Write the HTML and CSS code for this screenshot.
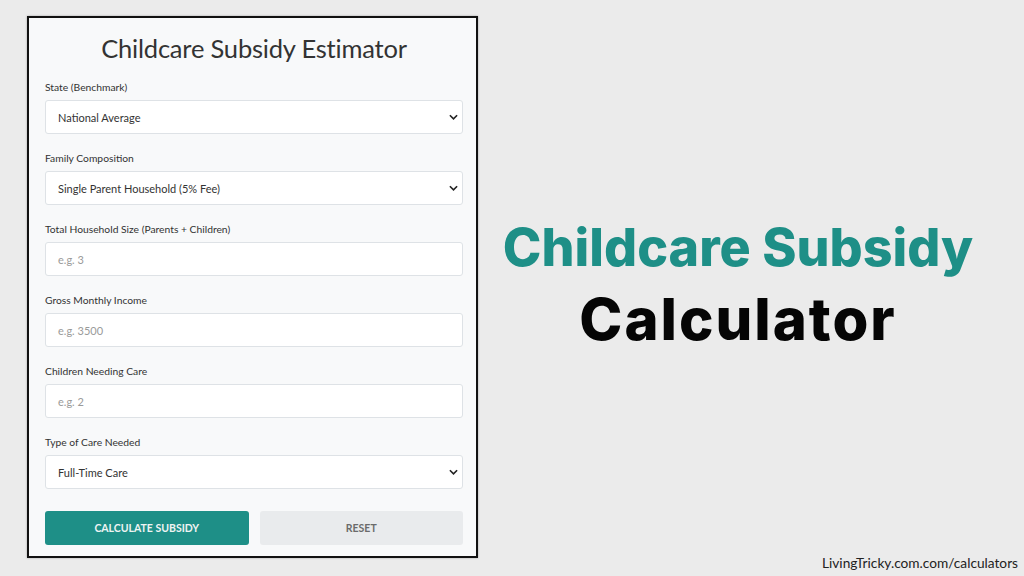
FILE: index.html
```html
<!DOCTYPE html>
<html lang="en">
<head>
<meta charset="utf-8">
<title>Childcare Subsidy Calculator</title>
<link rel="stylesheet" href="styles.css">
</head>
<body>
<div class="page">
  <div class="left">
    <form class="card">
      <h1 class="card-title">Childcare Subsidy Estimator</h1>
      <div class="field">
        <label class="label">State (Benchmark)</label>
        <div class="control select"><span>National Average</span><svg class="chev" viewBox="0 0 10 6" width="9" height="6"><path d="M1 1l4 4 4-4" fill="none" stroke="#222" stroke-width="1.8"/></svg></div>
      </div>
      <div class="field">
        <label class="label">Family Composition</label>
        <div class="control select"><span>Single Parent Household (5% Fee)</span><svg class="chev" viewBox="0 0 10 6" width="9" height="6"><path d="M1 1l4 4 4-4" fill="none" stroke="#222" stroke-width="1.8"/></svg></div>
      </div>
      <div class="field">
        <label class="label">Total Household Size (Parents + Children)</label>
        <div class="control input"><span class="ph">e.g. 3</span></div>
      </div>
      <div class="field">
        <label class="label">Gross Monthly Income</label>
        <div class="control input"><span class="ph">e.g. 3500</span></div>
      </div>
      <div class="field">
        <label class="label">Children Needing Care</label>
        <div class="control input"><span class="ph">e.g. 2</span></div>
      </div>
      <div class="field">
        <label class="label">Type of Care Needed</label>
        <div class="control select"><span>Full-Time Care</span><svg class="chev" viewBox="0 0 10 6" width="9" height="6"><path d="M1 1l4 4 4-4" fill="none" stroke="#222" stroke-width="1.8"/></svg></div>
      </div>
      <div class="buttons">
        <div class="btn btn-primary">CALCULATE SUBSIDY</div>
        <div class="btn btn-secondary">RESET</div>
      </div>
    </form>
  </div>
  <div class="right">
    <div class="headline">
      <div class="h-teal">Childcare Subsidy</div>
      <div class="h-black">Calculator</div>
    </div>
    <div class="footer">LivingTricky.com.com/calculators</div>
  </div>
</div>
</body>
</html>
```

FILE: styles.css
```css
* { box-sizing: border-box; }
html, body { margin: 0; padding: 0; }
body {
  background: #ebebeb;
  width: 1024px;
  height: 576px;
  overflow: hidden;
  font-family: "Lato", "Open Sans", sans-serif;
}
.page {
  display: flex;
  height: 576px;
}
.left {
  padding: 16px 0 0 27px;
}
.card {
  width: 451px;
  height: 542px;
  border: 2px solid #111;
  background: #f8f9fa;
  padding: 14px 13px 0 16px;
  display: flex;
  flex-direction: column;
  box-shadow: 0 0 2px rgba(0,0,0,0.3);
}
.card-title {
  margin: 0 0 17px 0;
  text-align: center;
  font-weight: 400;
  font-size: 25.5px;
  line-height: 32px;
  color: #333;
  letter-spacing: -0.2px;
}
.field {
  display: flex;
  flex-direction: column;
  margin-bottom: 18px;
}
.label {
  font-size: 10.3px;
  line-height: 13px;
  color: #333;
  margin-bottom: 6px;
}
.control {
  height: 34px;
  background: #fff;
  border: 1px solid #dee2e6;
  border-radius: 3px;
  display: flex;
  align-items: center;
  justify-content: space-between;
  padding: 0 4px 0 12px;
  font-size: 11px;
  color: #333;
}
.ph { color: #9a9a9a; }
.buttons {
  display: flex;
  gap: 11px;
  margin-top: 4px;
}
.btn {
  flex: 1;
  height: 34px;
  border-radius: 3px;
  display: flex;
  align-items: center;
  justify-content: center;
  font-size: 10.5px;
  font-weight: 700;
}
.btn-primary {
  background: #1e8f87;
  color: #eef4f3;
}
.btn-secondary {
  background: #e9ebed;
  color: #6b6b6b;
}
.right {
  flex: 1;
  display: flex;
  flex-direction: column;
}
.headline {
  flex: 1;
  display: flex;
  flex-direction: column;
  align-items: center;
  justify-content: center;
  padding: 14px 26px 0 0;
}
.h-teal {
  font-family: "Inter", sans-serif;
  font-weight: 800;
  font-size: 52px;
  line-height: 70px;
  color: #1e8f87;
}
.h-black {
  font-family: "Inter", sans-serif;
  font-weight: 800;
  font-size: 58px;
  line-height: 72px;
  letter-spacing: 2px;
  color: #050505;
}
.footer {
  text-align: right;
  font-size: 13.7px;
  color: #222;
  padding: 0 6px 5px 0;
}
```
